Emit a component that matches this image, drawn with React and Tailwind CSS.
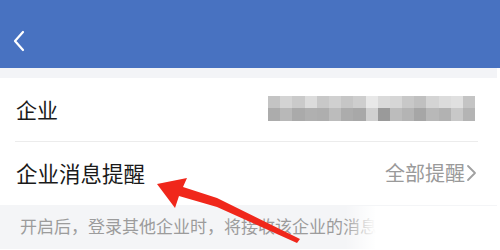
import React from "react";

const row1 = ["#c4c4c4","#d4d4d4","#cacaca","#dcdcdc","#c8c8c8","#d0d0d0","#c6c6c6","#cecece","#e8e8e8","#dadada","#d6d6d6","#c8c8c8","#c0c0c0","#d4d4d4","#dcdcdc","#e0e0e0","#c4c4c4"];
const row2 = ["#acacac","#b8b8b8","#aaaaaa","#b0b0b0","#aeaeae","#bcbcbc","#acacac","#a8a8a8","#d0d0d0","#9a9a9a","#bcbcbc","#b4b4b4","#a6a6a6","#b8b8b8","#b2b2b2","#c8c8c8","#b4b4b4"];

export default function App() {
  return (
    <div
      className="relative w-[500px] h-[250px] overflow-hidden bg-white"
      style={{ fontFamily: '"Noto Sans CJK SC", "Noto Sans", sans-serif' }}
    >
      <div className="h-[68px] bg-[#4872c1] flex items-end pb-[16px] pl-[12px]">
        <svg width="14" height="22" viewBox="0 0 14 22" fill="none">
          <path d="M11 2 L3 11 L11 20" stroke="white" strokeWidth="2.2" strokeLinecap="round" strokeLinejoin="round" />
        </svg>
      </div>
      <div className="h-[10px] bg-[#f3f4f7]" />
      <div className="bg-white pl-[15px] pr-[22px]">
        <div className="h-[64px] flex items-center justify-between border-b border-[#ececec]">
          <span className="text-[21px] text-[#1a1a1a] pl-[1px] leading-none">企业</span>
          <div className="grid grid-cols-[repeat(17,12.2px)] grid-rows-[12px_13px] w-[207px] mr-[3px] mt-[-2px]">
            {row1.map((c, i) => (
              <div key={"a" + i} style={{ backgroundColor: c }} />
            ))}
            {row2.map((c, i) => (
              <div key={"b" + i} style={{ backgroundColor: c }} />
            ))}
          </div>
        </div>
        <div className="h-[63px] flex items-center justify-between">
          <span className="text-[21.5px] text-[#1a1a1a] pl-[1px] leading-none mt-[-2px]">企业消息提醒</span>
          <div className="flex items-center text-[#9a9a9a] mt-[-2px]">
            <span className="text-[20px] leading-none">全部提醒</span>
            <svg width="12" height="18" viewBox="0 0 12 18" fill="none" className="ml-[1px]">
              <path d="M2 2 L9 9 L2 16" stroke="#a0a0a0" strokeWidth="1.8" strokeLinecap="round" strokeLinejoin="round" />
            </svg>
          </div>
        </div>
      </div>
      <div className="h-[44px] bg-[#f4f5f7] pl-[20px] pt-[9px]">
        <span className="text-[17px] text-[#9c9c9c] leading-none whitespace-nowrap">开启后，登录其他企业时，将接收该企业的消息</span>
      </div>
      <div className="absolute left-[345px] top-[206px] w-[155px] h-[44px] bg-gradient-to-r from-transparent to-white to-[20%]" />
      <div className="absolute right-0 top-[68px] w-[3px] h-[182px] bg-white" />
      <svg className="absolute left-0 top-0" width="500" height="250" viewBox="0 0 500 250">
        <polygon points="157,184 187,178 183,187 217,198 300,239 297,243 217,207 179,196 175,208" fill="#f0271b" />
      </svg>
    </div>
  );
}
